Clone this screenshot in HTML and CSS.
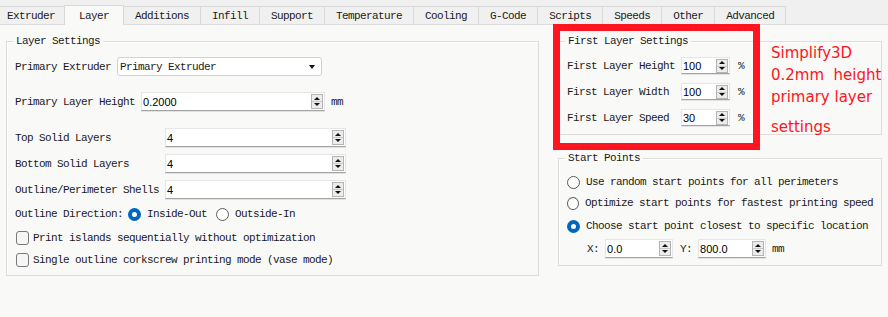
FILE: index.html
```html
<!doctype html>
<html>
<head>
	<meta charset="utf-8" />
	<title>Layer</title>
	<link rel="stylesheet" href="styles.css">
</head>
<body>

<div class="tabs">
	<span class="tab first">Extruder</span>
	<span class="tab active">Layer</span>
	<span class="tab">Additions</span>
	<span class="tab">Infill</span>
	<span class="tab">Support</span>
	<span class="tab">Temperature</span>
	<span class="tab">Cooling</span>
	<span class="tab">G-Code</span>
	<span class="tab">Scripts</span>
	<span class="tab">Speeds</span>
	<span class="tab">Other</span>
	<span class="tab">Advanced</span>
</div>

<div class="panel">

	<fieldset class="group layer">
		<legend>Layer Settings</legend>

		<div class="row r-ext">
			<span>Primary Extruder</span>
			<div class="combo"><span>Primary Extruder</span><i class="arrow"></i></div>
		</div>

		<div class="row r-height">
			<span>Primary Layer Height</span>
			<div class="spin w-height"><span class="val">0.2000</span><span class="btns"><i class="up"></i><i class="down"></i></span></div>
			<span>mm</span>
		</div>

		<div class="solid">
			<span>Top Solid Layers</span>
			<div class="spin"><span class="val">4</span><span class="btns"><i class="up"></i><i class="down"></i></span></div>
			<span>Bottom Solid Layers</span>
			<div class="spin"><span class="val">4</span><span class="btns"><i class="up"></i><i class="down"></i></span></div>
			<span>Outline/Perimeter Shells</span>
			<div class="spin"><span class="val">4</span><span class="btns"><i class="up"></i><i class="down"></i></span></div>
		</div>

		<div class="row r-dir">
			<span>Outline Direction:</span>
			<span class="radio on"></span><span>Inside-Out</span>
			<span class="radio second"></span><span>Outside-In</span>
		</div>

		<div class="row check r-chk1"><span class="box"></span><span>Print islands sequentially without optimization</span></div>
		<div class="row check r-chk2"><span class="box"></span><span>Single outline corkscrew printing mode (vase mode)</span></div>
	</fieldset>

	<div class="side">
		<fieldset class="group first">
			<legend>First Layer Settings</legend>
			<div class="pct">
				<span>First Layer Height</span>
				<div class="spin small"><span class="val">100</span><span class="btns"><i class="up"></i><i class="down"></i></span></div>
				<span>%</span>
				<span>First Layer Width</span>
				<div class="spin small"><span class="val">100</span><span class="btns"><i class="up"></i><i class="down"></i></span></div>
				<span>%</span>
				<span>First Layer Speed</span>
				<div class="spin small"><span class="val">30</span><span class="btns"><i class="up"></i><i class="down"></i></span></div>
				<span>%</span>
			</div>
		</fieldset>

		<fieldset class="group start">
			<legend>Start Points</legend>
			<div class="row opt r-opt1"><span class="radio"></span><span>Use random start points for all perimeters</span></div>
			<div class="row opt r-opt2"><span class="radio"></span><span>Optimize start points for fastest printing speed</span></div>
			<div class="row opt r-opt3"><span class="radio on"></span><span>Choose start point closest to specific location</span></div>
			<div class="row r-xy">
				<span>X:</span>
				<div class="spin xy"><span class="val">0.0</span><span class="btns"><i class="up"></i><i class="down"></i></span></div>
				<span class="ylabel">Y:</span>
				<div class="spin xy"><span class="val">800.0</span><span class="btns"><i class="up"></i><i class="down"></i></span></div>
				<span>mm</span>
			</div>
		</fieldset>
	</div>

	<!-- annotation drawn over the screenshot -->
	<div class="mark"></div>
	<div class="note">
		<div>Simplify3D</div>
		<div>0.2mm&nbsp; height</div>
		<div>primary layer</div>
		<div class="last">settings</div>
	</div>

</div>

</body>
</html>
```

FILE: styles.css
```css
body {
	margin: 0;
	background: #f9f9f8;
	color: #1a1a1a;

	font-family: "Liberation Mono", monospace;
	font-size: 11px;
	letter-spacing: -0.6px;
	white-space: nowrap;
}

/* tab strip */

.tabs {
	display: flex;
	align-items: flex-end;

	height: 25px;
	box-sizing: border-box;
	background: #f0f0f0;
	border-bottom: 1px solid #dcdcdc;
}

.tab {
	height: 17px;
	line-height: 18px;
	padding: 0 11px;
	margin-left: -1px;

	border: 1px solid #d8d8d8;
	border-bottom: 0;
	background: #f0f0f0;
}

.tab.first {
	margin-left: 0;
	border-left: 0;
	padding-left: 7px;
	padding-right: 9px;
}

.tab.active {
	height: 19px;
	line-height: 20px;
	margin-bottom: -1px;
	padding: 0 14px;
	background: #f9f9f8;
}

/* content */

.panel {
	position: relative;
	display: flex;
	align-items: flex-start;
	gap: 19px;

	padding: 10px 0 0 6px;
}

.group {
	margin: 0;
	padding: 0 8px 7px;
	min-width: 0;
	box-sizing: border-box;

	border: 1px solid #dcdcdc;
	box-shadow: inset 1px 1px 0 #fff;
}

.group legend {
	padding: 0 3px;
	margin-left: -2px;
	height: 12px;
	line-height: 12px;
}

.layer {
	width: 533px;
}

.side {
	width: 324px;
}

.row {
	display: flex;
	align-items: center;
	gap: 6px;
}

.r-ext    { margin-top: 10px; height: 19px; }
.r-height { margin-top: 16px; height: 19px; }
.r-dir    { margin-top: 7px;  height: 16px; }
.r-chk1   { margin-top: 8px;  height: 16px; }
.r-chk2   { margin-top: 6px;  height: 16px; }

.solid {
	display: grid;
	grid-template-columns: 144px 181px;
	column-gap: 6px;
	row-gap: 7px;
	align-items: center;

	margin-top: 17px;
}

/* inputs */

.combo {
	display: flex;
	align-items: center;
	justify-content: space-between;

	width: 205px;
	height: 19px;
	box-sizing: border-box;
	padding: 0 6px 0 2px;

	background: #fff;
	border: 1px solid #d2d2d2;
	border-radius: 3px;
}

.arrow {
	width: 0;
	height: 0;
	border-left: 3px solid transparent;
	border-right: 3px solid transparent;
	border-top: 4px solid #111;
}

.spin {
	display: flex;
	align-items: center;
	justify-content: space-between;

	height: 19px;
	box-sizing: border-box;
	padding: 0 1px 0 1px;

	background: #fff;
	border: 1px solid #e6e6e6;
	border-bottom-color: #a3a3a3;
	box-shadow: 0 1px 0 #e2e2e2;
}

.w-height { width: 184px; }
.small    { width: 49px; height: 17px; }
.xy       { width: 68px; }

.val {
	font-family: "Liberation Sans", sans-serif;
	font-size: 11px;
	letter-spacing: 0;
	color: #000;
}

.btns {
	display: flex;
	flex-direction: column;
	align-items: center;
	justify-content: space-around;

	width: 12px;
	height: 15px;
	box-sizing: border-box;

	background: #ececec;
	border: 1px solid #b4b4b4;
	background-image: linear-gradient(#ececec 6px, #c9c9c9 6px, #c9c9c9 7px, #ececec 7px);
}

.small .btns {
	height: 14px;
}

.up,
.down {
	width: 0;
	height: 0;
	border-left: 3px solid transparent;
	border-right: 3px solid transparent;
}

.up   { border-bottom: 3px solid #111; }
.down { border-top: 3px solid #111; }

/* radios and checks */

.radio {
	width: 13px;
	height: 13px;
	box-sizing: border-box;
	border-radius: 50%;
	border: 1px solid #5c5c5c;
	background: #fff;
	margin-left: -1px;
}

.radio.on {
	border: 4px solid #0067c0;
}

.radio.second {
	margin-left: 3px;
}

.check {
	gap: 4px;
}

.check .box {
	width: 13px;
	height: 14px;
	box-sizing: border-box;
	margin-left: 1px;
	border: 1px solid #7a7a7a;
	border-radius: 3px;
	background: #f6f6f6;
}

/* right column */

.pct {
	display: grid;
	grid-template-columns: 108px 49px auto;
	column-gap: 6px;
	row-gap: 9px;
	align-items: center;

	margin-top: 10px;
	padding-bottom: 1px;
}

.pct > span:nth-child(3n) {
	padding-left: 2px;
}

.start {
	margin-top: 17px;
}

.opt {
	height: 16px;
	gap: 6px;
}

.opt .radio {
	margin-left: 0;
}

.r-opt1 { margin-top: 10px; }
.r-opt2 { margin-top: 5px; }
.r-opt3 { margin-top: 7px; }

.r-xy {
	margin-top: 5px;
	height: 19px;
	padding-left: 20px;
}

.ylabel {
	margin-left: 1px;
}

/* red annotation */

.mark {
	position: absolute;
	left: 553px;
	top: -1px;
	width: 207px;
	height: 126px;
	box-sizing: border-box;
	border: 7px solid #fe1520;
}

.note {
	position: absolute;
	left: 771px;
	top: 17px;

	font-family: "DejaVu Sans", sans-serif;
	font-size: 15px;
	line-height: 22px;
	letter-spacing: 0;
	color: #fe1520;
}

.note .last {
	margin-top: 8px;
}
```
